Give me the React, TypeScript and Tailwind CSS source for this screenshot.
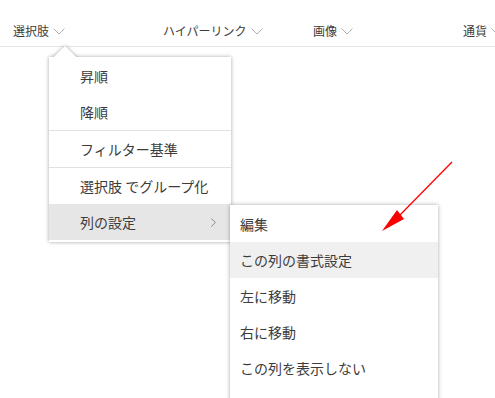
import { ChevronRight } from 'lucide-react';

const COLUMNS = ['選択肢', 'ハイパーリンク', '画像', '通貨'];

const SUB_ITEMS = [
  '編集',
  'この列の書式設定',
  '左に移動',
  '右に移動',
  'この列を表示しない',
  '列の表示/非表示を切り替える',
];

function HeaderChevron() {
  return (
    <svg width="12" height="7" viewBox="0 0 12 7" className="shrink-0 mt-[1px]">
      <polyline points="0.5,0.5 6,6 11.5,0.5" fill="none" stroke="#b0b0b0" strokeWidth="1" />
    </svg>
  );
}

function MenuItem({ label, hover, sub }: { label: string; hover?: boolean; sub?: boolean }) {
  return (
    <div
      className={`h-[36px] flex items-center pl-[31px] pr-[10px] text-[14px] text-[#3c3c3c] ${
        hover ? 'bg-[#e6e6e6]' : ''
      }`}
    >
      <span className="flex-1">{label}</span>
      {sub && <ChevronRight size={15} strokeWidth={1} className="text-[#555]" />}
    </div>
  );
}

export default function App() {
  return (
    <div
      className="relative w-[495px] h-[398px] overflow-hidden bg-white"
      style={{ fontFamily: '"Noto Sans CJK JP", "Noto Sans", sans-serif' }}
    >
      {/* column headers */}
      <div className="flex h-[47px] border-b border-[#e5e5e5] items-end pb-[7px]">
        {COLUMNS.map((c) => (
          <div key={c} className="w-[150px] shrink-0 pl-[13px] flex items-center gap-[4px] text-[12px] leading-[16px] text-[#3c3c3c]">
            <span>{c}</span>
            <HeaderChevron />
          </div>
        ))}
      </div>

      {/* column menu */}
      <div className="absolute left-[49px] top-[57px] w-[182px] bg-white shadow-[0_0_4px_rgba(0,0,0,0.35)]">
        <div className="absolute left-[8px] top-[-8px] w-[16px] h-[16px] rotate-45 bg-white shadow-[0_0_4px_rgba(0,0,0,0.35)]" />
        <div className="relative bg-white pt-[1px] pb-[2px]">
          <MenuItem label="昇順" />
          <MenuItem label="降順" />
          <div className="h-px bg-[#e1e1e1]" />
          <MenuItem label="フィルター基準" />
          <div className="h-px bg-[#e1e1e1]" />
          <MenuItem label="選択肢 でグループ化" />
          <MenuItem label="列の設定" hover sub />
        </div>
      </div>

      {/* submenu */}
      <div className="absolute left-[230px] top-[205px] w-[208px] bg-white shadow-[0_0_4px_rgba(0,0,0,0.35)] pt-[1px]">
        {SUB_ITEMS.map((s, i) => (
          <div
            key={s}
            className={`h-[36px] flex items-center pl-[10px] text-[14px] text-[#3c3c3c] whitespace-nowrap ${
              i === 1 ? 'bg-[#f0f0f0]' : ''
            }`}
          >
            {s}
          </div>
        ))}
      </div>

      {/* red annotation arrow */}
      <svg className="absolute inset-0 pointer-events-none" width="495" height="398">
        <line x1="452" y1="162" x2="399" y2="216" stroke="#ff0000" strokeWidth="1.3" />
        <polygon points="382,231 397,210 404,219" fill="#ff0000" />
      </svg>
    </div>
  );
}
